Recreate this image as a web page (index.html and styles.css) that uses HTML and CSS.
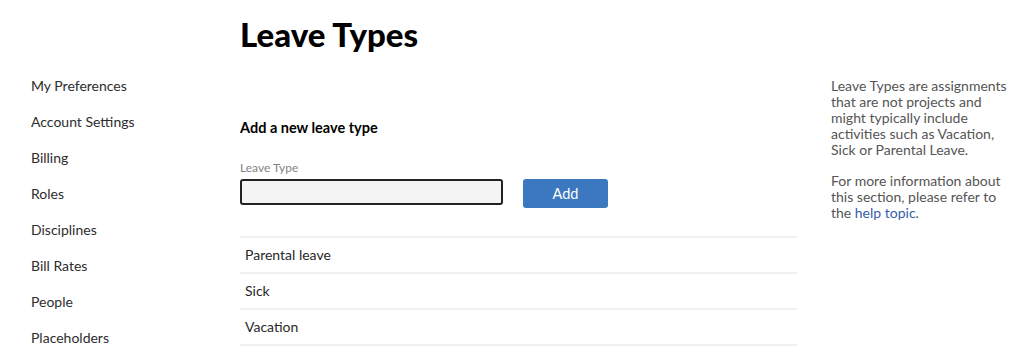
FILE: index.html
```html
<!DOCTYPE html>
<html lang="en">
  <head>
    <meta charset="UTF-8" />
    <meta name="viewport" content="width=device-width, initial-scale=1.0" />
    <title>Leave Types</title>
    <link rel="stylesheet" href="styles.css">
  </head>
  <body>
    <div class="page">
      <nav class="sidebar">
        <a href="#">My Preferences</a>
        <a href="#">Account Settings</a>
        <a href="#">Billing</a>
        <a href="#">Roles</a>
        <a href="#">Disciplines</a>
        <a href="#">Bill Rates</a>
        <a href="#">People</a>
        <a href="#">Placeholders</a>
      </nav>

      <main class="content">
        <h1 class="title">Leave Types</h1>

        <div class="subtitle">Add a new leave type</div>

        <form class="add-form" onsubmit="return false">
          <label class="field">
            <span class="label">Leave Type</span>
            <input type="text" id="leave-type" />
          </label>
          <button type="submit">Add</button>
        </form>

        <ul class="leave-list">
          <li>Parental leave</li>
          <li>Sick</li>
          <li>Vacation</li>
        </ul>
      </main>

      <aside class="help">
        <p>Leave Types are assignments that are not projects and might typically include activities such as Vacation, Sick or Parental Leave.</p>
        <p>For more information about this section, please refer to the <a href="#">help topic</a>.</p>
      </aside>
    </div>
  </body>
</html>
```

FILE: styles.css
```css
body {
  margin: 0;
  padding: 0;
  background: white;
  font-family: Lato, "Open Sans", sans-serif;
  color: rgb(51, 51, 51);
}
.page {
  display: flex;
  align-items: flex-start;
}
.sidebar {
  width: 209px;
  padding: 68px 0 0 31px;
  display: flex;
  flex-direction: column;
}
.sidebar a {
  font-size: 14px;
  line-height: 36px;
  color: rgb(45, 45, 45);
  text-decoration: none;
}
.content {
  width: 557px;
}
.title {
  font-size: 33px;
  font-weight: 900;
  color: black;
  line-height: 40px;
  margin: 14px 0 0 0;
}
.subtitle {
  font-size: 14.5px;
  font-weight: 700;
  color: black;
  line-height: 20px;
  margin-top: 64px;
}
.add-form {
  display: flex;
  align-items: flex-end;
  gap: 20px;
  margin-top: 22px;
}
.field {
  display: flex;
  flex-direction: column;
}
.field .label {
  font-size: 12px;
  line-height: 16px;
  color: rgb(130, 130, 130);
  margin-bottom: 3px;
}
.field input {
  width: 263px;
  height: 26px;
  box-sizing: border-box;
  border: 2px solid rgb(34, 34, 34);
  border-radius: 3px;
  background: rgb(244, 244, 244);
  outline: none;
  padding: 0 6px;
  font-family: Lato, sans-serif;
  font-size: 14px;
  margin-bottom: 3px;
}
.add-form button {
  width: 85px;
  height: 29px;
  border: none;
  border-radius: 3px;
  background: rgb(59, 120, 192);
  color: white;
  font-family: Lato, sans-serif;
  font-size: 14.5px;
  cursor: pointer;
}
.leave-list {
  list-style: none;
  margin: 28px 0 0 0;
  padding: 0;
  border-top: 2px solid rgb(240, 240, 240);
}
.leave-list li {
  font-size: 14px;
  line-height: 34px;
  padding-left: 5px;
  border-bottom: 2px solid rgb(240, 240, 240);
  color: rgb(40, 40, 40);
}
.help {
  width: 182px;
  margin-left: 34px;
  padding-top: 78px;
  font-size: 14px;
  line-height: 16px;
  color: rgb(85, 85, 85);
}
.help p {
  margin: 0 0 15px 0;
}
.help a {
  color: rgb(54, 93, 168);
  text-decoration: none;
}
```
